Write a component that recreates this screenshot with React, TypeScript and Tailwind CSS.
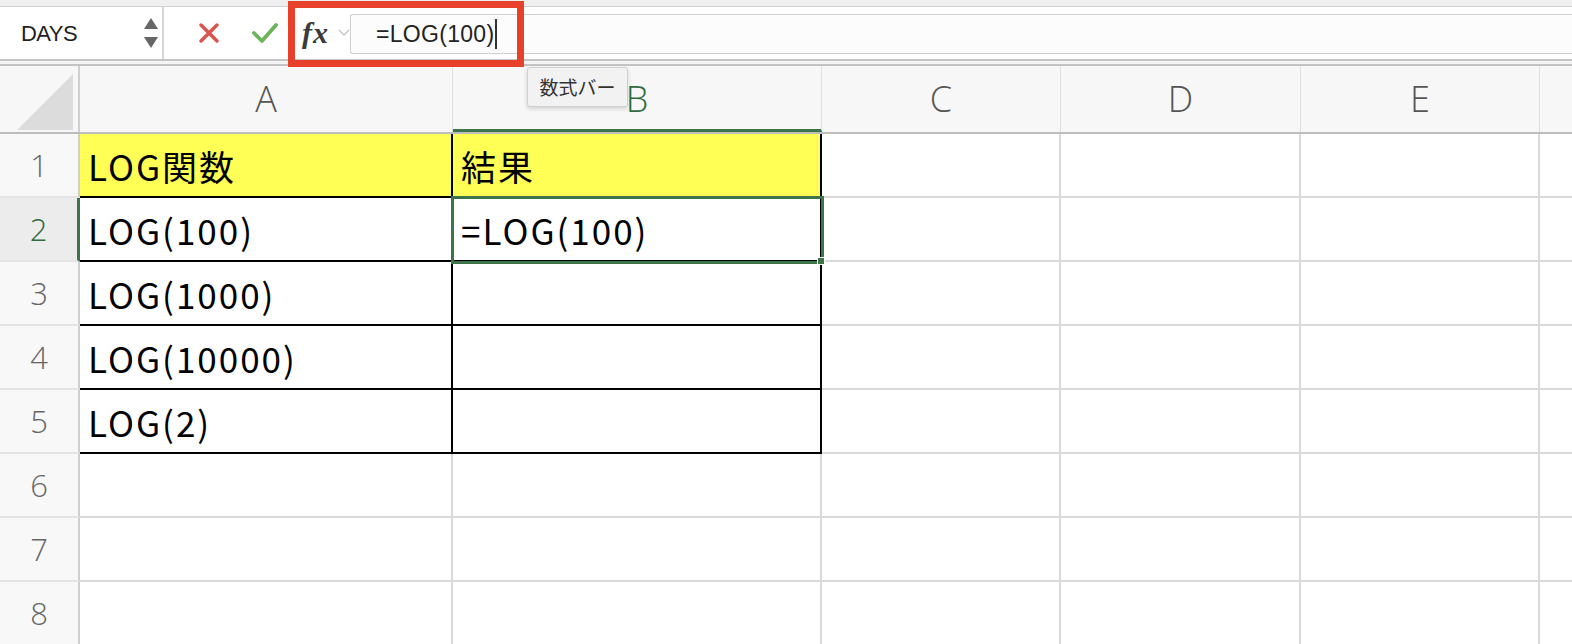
import React from "react";

const COLS = [
  { k: "A", w: "w-[373px]" },
  { k: "B", w: "w-[369px]" },
  { k: "C", w: "w-[239px]" },
  { k: "D", w: "w-[240px]" },
  { k: "E", w: "w-[239px]" },
  { k: "F", w: "w-[40px]" },
];

const DATA: Record<string, string> = {
  A1: "LOG関数",
  B1: "結果",
  A2: "LOG(100)",
  B2: "=LOG(100)",
  A3: "LOG(1000)",
  A4: "LOG(10000)",
  A5: "LOG(2)",
};

const JP = { fontFamily: '"Noto Sans CJK JP", "Noto Sans", sans-serif' };
const UI = { fontFamily: '"Liberation Sans", Arial, sans-serif' };
const HEAD = { fontFamily: '"Open Sans", "Liberation Sans", sans-serif', fontWeight: 300 };

function Cell({ col, row, w }: { col: string; row: number; w: string }) {
  const inTable = (col === "A" || col === "B") && row <= 5;
  const id = `${col}${row}`;
  const text = DATA[id];
  const yellow = row === 1 && inTable;
  const selected = id === "B2";
  return (
    <div
      className={`relative ${w} shrink-0 h-16 flex items-center pl-[8px] border-r-2 border-b-2 text-[35px] tracking-[2px] text-black ${
        inTable ? "border-black" : "border-[#d9d9d9]"
      } ${yellow ? "bg-[#ffff55]" : "bg-white"}`}
      style={JP}
    >
      <span className="whitespace-nowrap leading-none">{text}</span>
      {selected && (
        <>
          <div className="absolute z-10 -left-[2px] -top-[2px] w-[373px] h-[68px] border-[3px] border-[#3d744a] pointer-events-none" />
          <div className="absolute z-20 -right-[5px] -bottom-[5px] w-[8px] h-[8px] bg-[#3d744a] border border-white" />
        </>
      )}
    </div>
  );
}

export default function App() {
  return (
    <div className="relative w-[1572px] h-[644px] overflow-hidden bg-white select-none" style={UI}>
      {/* top strip */}
      <div className="h-[7px] bg-[#efefef] border-b border-[#d2d2d2]" />

      {/* formula bar */}
      <div className="flex h-[52px] bg-white">
        <div className="w-[164px] shrink-0 flex items-center justify-between pl-[21px] pr-[4px] border-r-2 border-[#d6d6d6]">
          <span className="text-[22px] text-[#1f1f1f] tracking-tight">DAYS</span>
          <div className="flex flex-col gap-[8px] items-center">
            <svg width="14" height="11" viewBox="0 0 14 11"><path d="M7 0L14 11H0Z" fill="#666" /></svg>
            <svg width="14" height="11" viewBox="0 0 14 11"><path d="M0 0H14L7 11Z" fill="#666" /></svg>
          </div>
        </div>
        <div className="w-[78px] flex items-center justify-center pl-[12px]">
          <svg width="22" height="22" viewBox="0 0 22 22">
            <path d="M3 3L19 19M19 3L3 19" stroke="#d9534f" strokeWidth="3.5" strokeLinecap="round" />
          </svg>
        </div>
        <div className="w-[46px] flex items-center justify-center">
          <svg width="28" height="24" viewBox="0 0 28 24">
            <path d="M3 12L11 20L25 4" stroke="#6cb35a" strokeWidth="3.8" fill="none" strokeLinecap="round" strokeLinejoin="round" />
          </svg>
        </div>
        <div className="flex items-center pl-[14px] w-[62px]">
          <span
            className="text-[30px] italic font-bold text-[#3a3a3a] leading-none tracking-[1px]"
            style={{ fontFamily: '"Liberation Serif", "DejaVu Serif", serif' }}
          >
            fx
          </span>
          <svg className="ml-[9px]" width="12" height="8" viewBox="0 0 12 8">
            <path d="M1 1L6 6L11 1" stroke="#c6c6c6" strokeWidth="1.5" fill="none" />
          </svg>
        </div>
        <div className="flex-1 mt-[7px] h-[40px] bg-[#fcfcfc] border-t border-b border-l border-[#cfcfcf] rounded-l-[3px] flex items-center pl-[25px]">
          <span className="text-[23px] text-[#222] tracking-[0.3px]">=LOG(100)</span>
          <span className="ml-[1px] w-[1.5px] h-[30px] bg-[#333]" />
        </div>
      </div>

      {/* double divider */}
      <div className="h-[7px] border-t-2 border-b-2 border-[#c4c4c4] bg-[#f4f4f4]" />

      {/* column headers */}
      <div className="flex h-[68px] border-b-2 border-[#bdbdbd] bg-[#f7f7f7]">
        <div className="w-[80px] shrink-0 border-r-2 border-[#cfcfcf] flex items-end justify-end pr-[5px] pb-[2px]">
          <svg width="56" height="56" viewBox="0 0 56 56">
            <path d="M56 0V56H0Z" fill="#dcdcdc" />
          </svg>
        </div>
        {COLS.map((c) => (
          <div
            key={c.k}
            className={`${c.w} shrink-0 flex items-center justify-center border-r border-[#e0e0e0] text-[36px] ${
              c.k === "B" ? "text-[#2f6b3d] border-b-[3px] border-b-[#3d744a] pt-[3px]" : "text-[#555]"
            }`}
            style={HEAD}
          >
            {c.k !== "F" ? c.k : ""}
          </div>
        ))}
      </div>

      {/* rows */}
      {[1, 2, 3, 4, 5, 6, 7, 8].map((r) => (
        <div key={r} className="flex">
          <div
            className={`w-[80px] shrink-0 h-16 flex items-center justify-center border-b-2 border-[#e4e4e4] text-[31px] ${
              r === 2 ? "bg-[#ececec] text-[#2f6b3d] border-r-[3px] border-r-[#3d744a]" : "bg-[#f8f8f8] text-[#666] border-r-2 border-r-[#cfcfcf]"
            }`}
            style={HEAD}
          >
            {r}
          </div>
          {COLS.map((c) => (
            <Cell key={c.k} col={c.k} row={r} w={c.w} />
          ))}
        </div>
      ))}

      {/* annotation box around the formula bar */}
      <div className="absolute left-[288px] top-[1px] w-[236px] h-[66px] border-[7px] border-[#e8412b]" />

      {/* tooltip */}
      <div
        className="absolute left-[527px] top-[67px] w-[101px] h-[40px] flex items-center justify-center bg-[#f2f2f2] border border-[#d0d0d0] rounded-[3px] shadow-[0_2px_4px_rgba(0,0,0,0.15)] text-[19px] text-[#333]"
        style={JP}
      >
        数式バー
      </div>
    </div>
  );
}
